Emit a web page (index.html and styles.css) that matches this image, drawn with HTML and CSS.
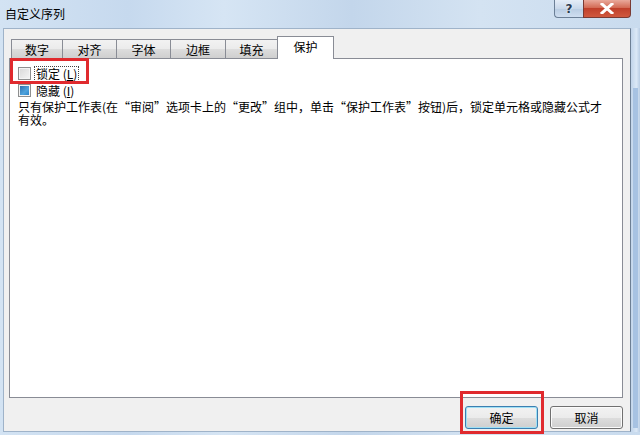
FILE: index.html
```html
<!DOCTYPE html>
<html lang="zh-CN">
<head>
<meta charset="utf-8">
<link rel="stylesheet" href="styles.css">
</head>
<body>
<div class="window">
  <div class="titlebar">
    <span class="title">自定义序列</span>
    <div class="caption-btns">
      <span class="cbtn help">?</span>
      <span class="cbtn close"><svg width="14" height="11" viewBox="0 0 14 11"><path d="M2 1 L12 10 M12 1 L2 10" stroke="#fff" stroke-width="3" stroke-linecap="square"/></svg></span>
    </div>
  </div>
  <div class="client-row">
    <div class="client">
      <div class="tabs">
        <span class="tab">数字</span>
        <span class="tab">对齐</span>
        <span class="tab">字体</span>
        <span class="tab">边框</span>
        <span class="tab">填充</span>
        <span class="tab active">保护</span>
      </div>
      <div class="panel">
        <label class="check-row">
          <span class="box"></span>
          <span class="label focus">锁定 (<u>L</u>)</span>
        </label>
        <label class="check-row">
          <span class="box mixed"><span class="fill"></span></span>
          <span class="label">隐藏 (<u>I</u>)</span>
        </label>
        <p class="note">只有保护工作表(在“审阅”选项卡上的“更改”组中，单击“保护工作表”按钮)后，锁定单元格或隐藏公式才有效。</p>
      </div>
      <div class="buttons">
        <span class="btn default">确定</span>
        <span class="btn">取消</span>
      </div>
    </div>
    <div class="side-frame"><span class="side-thumb"></span></div>
  </div>
  <div class="mark mark-lock"></div>
  <div class="mark mark-ok"></div>
</div>
</body>
</html>
```

FILE: styles.css
```css
html, body {
  margin: 0;
  padding: 0;
}
body {
  width: 640px;
  height: 435px;
  overflow: hidden;
  font-family: "Noto Sans CJK SC", "DejaVu Sans", sans-serif;
  font-size: 12px;
  color: #000;
  background: #c9dcf0;
}
.window {
  position: relative;
  width: 640px;
  height: 435px;
  display: flex;
  flex-direction: column;
  background: linear-gradient(90deg, #d3e3f3 0%, #c6d9ee 20%, #d6e5f4 35%, #c3d6eb 55%, #d4e3f2 75%, #c9dbee 100%);
}
.titlebar {
  height: 28px;
  display: flex;
  align-items: flex-start;
  flex-shrink: 0;
}
.title {
  margin: 6px 0 0 5px;
  font-size: 12px;
  line-height: 16px;
}
.caption-btns {
  margin-left: auto;
  margin-right: 9px;
  display: flex;
}
.cbtn {
  height: 18px;
  box-sizing: border-box;
  display: flex;
  align-items: center;
  justify-content: center;
  border: 1px solid #6b7f96;
  border-top: none;
}
.help {
  width: 29px;
  border-radius: 0 0 0 4px;
  border-right: none;
  background: linear-gradient(#e4edf7, #c9d8ea 50%, #b8cce2 51%, #cfdef0);
  color: #2a3a50;
  font-family: "DejaVu Sans", sans-serif;
  font-weight: bold;
  font-size: 12px;
  text-shadow: 0 0 2px #fff;
}
.close {
  width: 48px;
  border-radius: 0 0 4px 0;
  border-color: #7a3a33;
  background: linear-gradient(#e9a99b, #d36b55 45%, #c0402b 50%, #d0583e 100%);
}
.client-row {
  flex: 1;
  display: flex;
  padding-left: 3px;
  padding-bottom: 3px;
}
.client {
  flex: 1;
  background: #f0f0f0;
  border: 1px solid #9fb3c9;
  border-right-color: #6d7f94;
  display: flex;
  flex-direction: column;
  padding: 6px 7px 0 5px;
  box-sizing: border-box;
}
.side-frame {
  width: 9px;
  position: relative;
  background: linear-gradient(90deg, #c1d4ea, #dbe8f6 60%, #b9cde4);
}
.side-thumb {
  position: absolute;
  left: 2px;
  top: 60px;
  width: 5px;
  height: 340px;
  background: #a7c2e2;
}
.tabs {
  display: flex;
  align-items: flex-end;
  height: 23px;
  padding-left: 2px;
  position: relative;
  z-index: 1;
}
.tab {
  height: 19px;
  box-sizing: border-box;
  border: 1px solid #898c95;
  border-bottom: none;
  border-right: none;
  background: linear-gradient(#f2f2f2, #ebebeb 50%, #dddddd 51%, #cfcfcf);
  display: flex;
  align-items: center;
  justify-content: center;
  line-height: 14px;
  padding-top: 1px;
}
.tab:nth-child(1) { width: 51px; }
.tab:nth-child(2) { width: 54px; }
.tab:nth-child(3) { width: 54px; }
.tab:nth-child(4) { width: 55px; }
.tab:nth-child(5) { width: 53px; border-right: 1px solid #898c95; }
.tab.active {
  width: 57px;
  height: 23px;
  margin-left: -1px;
  background: #fff;
  border-right: 1px solid #898c95;
  margin-bottom: -1px;
  padding-bottom: 3px;
}
.panel {
  height: 340px;
  box-sizing: border-box;
  background: #fff;
  border: 1px solid #898c95;
  padding: 6px 8px 0 8px;
}
.check-row {
  display: flex;
  align-items: center;
  height: 17px;
}
.box {
  width: 13px;
  height: 13px;
  box-sizing: border-box;
  border: 1px solid #8e8f8f;
  background: linear-gradient(135deg, #d8d8d8, #f5f5f5);
  margin-right: 3px;
  display: flex;
  align-items: center;
  justify-content: center;
  box-shadow: inset 0 0 0 1px #f4f4f4;
}
.box.mixed { background: #e6eef7; }
.fill {
  width: 9px;
  height: 9px;
  background: linear-gradient(135deg, #2d6fae, #4fa3dc 60%, #2c84c8);
}
.label {
  line-height: 14px;
  padding: 0 1px;
  border: 1px dotted transparent;
}
.label.focus { border-color: #444; }
.label u { text-decoration: underline; }
.note {
  margin: 1px 0 0 0;
  width: 592px;
  line-height: 13px;
  font-size: 12px;
}
.buttons {
  display: flex;
  justify-content: flex-end;
  gap: 12px;
  padding-top: 8px;
}
.btn {
  width: 73px;
  height: 23px;
  box-sizing: border-box;
  border: 1px solid #707070;
  border-radius: 3px;
  background: linear-gradient(#f2f2f2, #ebebeb 50%, #dddddd 51%, #cfcfcf);
  display: flex;
  align-items: center;
  justify-content: center;
  box-shadow: inset 0 0 0 1px #fbfbfb;
}
.btn.default {
  border-color: #3c7fb1;
  box-shadow: inset 0 0 0 1px #9fe0f5;
}
.mark {
  position: absolute;
  border: 3px solid #e02a2e;
  box-sizing: border-box;
}
.mark-lock {
  left: 10px;
  top: 58px;
  width: 79px;
  height: 26px;
}
.mark-ok {
  left: 460px;
  top: 391px;
  width: 84px;
  height: 43px;
}
```
